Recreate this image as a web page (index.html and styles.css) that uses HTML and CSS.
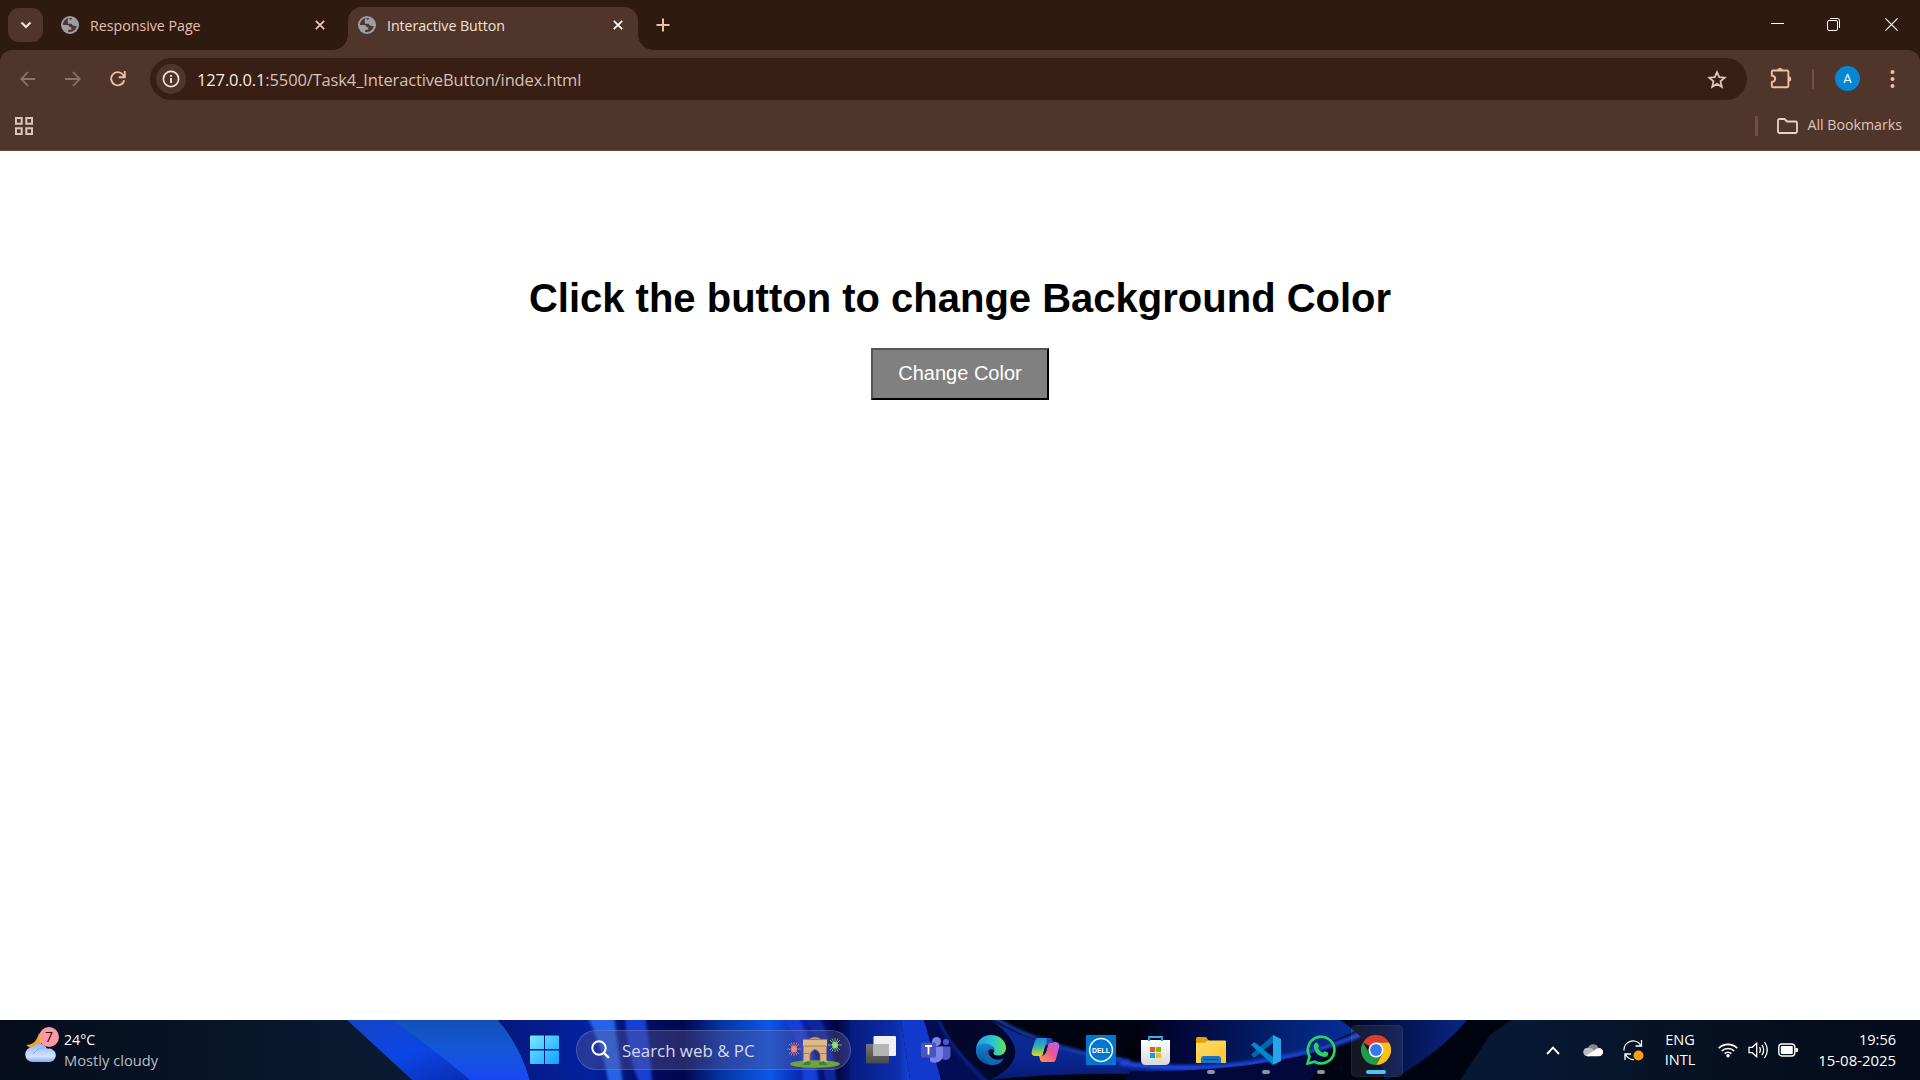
FILE: index.html
```html
<!DOCTYPE html>
<html lang="en">
<head>
<meta charset="utf-8">
<title>Interactive Button</title>
<link rel="stylesheet" href="styles.css">
</head>
<body>
<svg class="defs" width="0" height="0" aria-hidden="true">
  <symbol id="globe" viewBox="0 0 18 18">
    <circle cx="9" cy="9" r="9" fill="#9aa0a6"/>
    <path d="M8 2.1C4.500 2.600 2 5.500 2 9l3.900 0c1.700 0 2.700.9 2.700 2.300h1.700v2.500H7.200v1.900c4.200 1 8-1.900 8.600-5.700-.9-.8-1.900-1-3-.9-1.500 0-2-.9-2-2.100H7.600V4.600h2.700c0-1 .3-1.600 1-2.200C10.200 2 9 1.900 8 2.100z" fill="#50362a"/>
    <path d="M8 2.100C7.300 2.500 6.700 3.200 6.800 4.600v3.200H11c.1 1.300.8 2 2 2 1.200-.1 2.100.1 2.900.8A7 7 0 0 0 11.300 2.400c-.9.5-1.200 1.300-1.100 2.200z" fill="#9aa0a6"/>
  </symbol>
  <symbol id="cross" viewBox="0 0 10 10"><path d="M.8.800l8.400 8.400M9.200.800L.8 9.200" stroke="currentColor" stroke-width="1.700" fill="none"/></symbol>
</svg>

<header class="browser">
  <div class="tabstrip">
    <button class="tab-search"><svg width="12" height="8" viewBox="0 0 12 8"><path d="M1.500 1.500L6 6l4.500-4.500" fill="none" stroke="#f6e0d8" stroke-width="2.200"/></svg></button>
    <div class="tab">
      <svg class="globe"><use href="#globe"/></svg>
      <span>Responsive Page</span>
      <svg class="close"><use href="#cross"/></svg>
    </div>
    <div class="tab active">
      <svg class="globe"><use href="#globe"/></svg>
      <span>Interactive Button</span>
      <svg class="close"><use href="#cross"/></svg>
    </div>
    <svg class="new-tab" width="14" height="14" viewBox="0 0 14 14"><path d="M7 .5v13M.5 7h13" stroke="#f0bda6" stroke-width="2"/></svg>
    <div class="window-controls">
      <svg width="13" height="13" viewBox="0 0 13 13"><path d="M0 5.500h13" stroke="#fff"/></svg>
      <svg width="13" height="13" viewBox="0 0 13 13"><rect x=".5" y="2.500" width="10" height="10" rx="1.500" fill="none" stroke="#fff"/><path d="M3 .5h7.500a2 2 0 0 1 2 2V10" fill="none" stroke="#fff"/></svg>
      <svg width="13" height="13" viewBox="0 0 13 13"><path d="M.4.400l12.200 12.200M12.600.400L.4 12.600" stroke="#fff" stroke-width="1.200"/></svg>
    </div>
  </div>

  <div class="toolbar-bg">
    <div class="toolbar">
      <svg class="nav" width="16" height="16" viewBox="0 0 16 16"><path d="M15 8H1.500M8 1L1.300 8 8 15" fill="none" stroke="#8d7267" stroke-width="1.800"/></svg>
      <svg class="nav" width="16" height="16" viewBox="0 0 16 16"><path d="M0 8h14.500M8 1l6.700 7L8 15" fill="none" stroke="#8d7267" stroke-width="1.800"/></svg>
      <svg class="nav" width="16" height="16" viewBox="0 0 16 16"><path d="M14.200 9.200A6.600 6.600 0 1 1 12.800 3.500L14.500 5.600M14.800 0v6.200H8.700" fill="none" stroke="#f0bda6" stroke-width="1.900"/></svg>
      <div class="omnibox">
        <div class="site-info"><svg width="18" height="18" viewBox="0 0 18 18"><circle cx="9" cy="9" r="7.600" fill="none" stroke="#f3e0d9" stroke-width="1.700"/><path d="M9 8v5M9 5v1.800" stroke="#f3e0d9" stroke-width="1.900"/></svg></div>
        <span class="url"><b>127.0.0.1</b>:5500/Task4_InteractiveButton/index.html</span>
        <svg class="star" width="20" height="19" viewBox="0 0 20 19"><path d="M10 2.200l2.200 5 5.500.5-4.200 3.700 1.300 5.400L10 13.900l-4.800 2.900 1.300-5.400L2.300 7.700l5.500-.5z" fill="none" stroke="#dcc5bd" stroke-width="1.800"/></svg>
      </div>
      <svg class="puzzle" width="22" height="22" viewBox="0 0 22 22"><path d="M3 3.500H17.200A1.200 1.200 0 0 1 18.400 4.700V19a1.200 1.200 0 0 1-1.200 1.200H3A1.200 1.200 0 0 1 1.800 19v-3.900Q5.200 14.500 5.200 11.800T1.800 8.500V4.700A1.200 1.200 0 0 1 3 3.500z" fill="none" stroke="#f0bda6" stroke-width="1.900"/><path d="M7.300 3.600a2.700 2.700 0 0 1 5.400 0zM18.500 9.200a2.700 2.700 0 0 1 0 5.400z" fill="#f0bda6"/></svg>
      <i class="divider"></i>
      <span class="avatar">A</span>
      <svg class="menu" width="5" height="18" viewBox="0 0 5 18" fill="#f0bda6"><circle cx="2.500" cy="2" r="2"/><circle cx="2.500" cy="9" r="2"/><circle cx="2.500" cy="16" r="2"/></svg>
    </div>
    <div class="bookmarks">
      <svg width="18" height="18" viewBox="0 0 18 18"><path d="M1 1h5.700v5.700H1zM11.300 1H17v5.700h-5.700zM1 11.300h5.700V17H1zM11.300 11.300H17V17h-5.700z" fill="none" stroke="#dcc5bd" stroke-width="2"/></svg>
      <div class="all-bookmarks">
        <i class="divider wide"></i>
        <svg width="21" height="16" viewBox="0 0 21 16"><path d="M2.500 1h5L10 3.500h8.500A1.500 1.500 0 0 1 20 5v8.500a1.500 1.500 0 0 1-1.500 1.500h-16A1.500 1.500 0 0 1 1 13.500v-11A1.500 1.500 0 0 1 2.500 1z" fill="none" stroke="#e6d3cc" stroke-width="1.800"/></svg>
        <span>All Bookmarks</span>
      </div>
    </div>
  </div>
</header>

<main class="page">
  <h1>Click the button to change Background Color</h1>
  <button class="change">Change Color</button>
</main>

<footer class="taskbar">
  <svg class="wallpaper" width="1920" height="60" viewBox="0 0 1920 60" preserveAspectRatio="none">
    <defs>
      <filter id="soft" x="-5%" y="-50%" width="110%" height="200%"><feGaussianBlur stdDeviation="1.600"/></filter>
      <linearGradient id="base"><stop offset="0" stop-color="#050d1c"/><stop offset=".19" stop-color="#091a31"/><stop offset=".8" stop-color="#071832"/><stop offset=".9" stop-color="#061020"/><stop offset="1" stop-color="#040b1a"/></linearGradient>
      <linearGradient id="p1" x1="0" y1="0" x2="1" y2="1"><stop offset="0" stop-color="#1646c4"/><stop offset=".5" stop-color="#0b45e5"/><stop offset="1" stop-color="#0928a8"/></linearGradient>
      <linearGradient id="p2" x1="0" y1="0" x2="0" y2="1"><stop offset="0" stop-color="#1252b8"/><stop offset=".5" stop-color="#1457da"/><stop offset="1" stop-color="#1848f4"/></linearGradient>
      <linearGradient id="p3" gradientUnits="userSpaceOnUse" x1="498" y1="0" x2="870" y2="0"><stop offset="0" stop-color="#06177e"/><stop offset=".25" stop-color="#0422a0"/><stop offset=".38" stop-color="#030e66"/><stop offset=".5" stop-color="#02084c"/><stop offset=".6" stop-color="#0634a4"/><stop offset=".73" stop-color="#0c58e8"/><stop offset=".84" stop-color="#0618a0"/><stop offset=".91" stop-color="#02043c"/><stop offset="1" stop-color="#0a31bd"/></linearGradient>
      <linearGradient id="p4" x1="0" y1="0" x2="1" y2="0"><stop offset="0" stop-color="#071b7e"/><stop offset=".8" stop-color="#0c2fae"/><stop offset="1" stop-color="#1746d8"/></linearGradient>
      <linearGradient id="p5" x1="0" y1="0" x2="0" y2="1"><stop offset="0" stop-color="#0d2a9a"/><stop offset=".65" stop-color="#0a2690"/><stop offset="1" stop-color="#061a70"/></linearGradient>
      <linearGradient id="p6" x1="0" y1="0" x2="1" y2="0"><stop offset="0" stop-color="#000"/><stop offset=".25" stop-color="#02083c"/><stop offset=".6" stop-color="#031f6c"/><stop offset="1" stop-color="#0733a5"/></linearGradient>
      <linearGradient id="p7" x1="0" y1="0" x2="1" y2="0"><stop offset="0" stop-color="#000518"/><stop offset="1" stop-color="#0a2588"/></linearGradient>
    </defs>
    <rect width="1920" height="60" fill="url(#base)"/>
    <path d="M347 0L412 60H1460L1490 15 1511 0z" fill="#000310"/>
    <path d="M347 0L412 60H490L402 0z" fill="url(#p1)"/>
    <path d="M392 0Q435 30 470 60H530Q520 25 498 0z" fill="url(#p2)"/>
    <path d="M498 0Q520 25 530 60H900V0z" fill="url(#p3)"/>
    <g filter="url(#soft)">
      <path d="M587 -4Q602 25 609 64H623L614 -4z" fill="#2863e6"/>
      <path d="M625 -4Q628 40 640 64H652Q650 25 645 -4z" fill="#133fd4"/>
      <path d="M782 -4Q802 20 803 64H819Q814 25 797 -4z" fill="#183fd5"/>
      <path d="M803 -4Q823 25 825 64H837Q834 25 819 -4z" fill="#0c259b"/>
    </g>
    <path d="M850 0h51l9 60h-60z" fill="url(#p4)"/>
    <path d="M901 0h23q13 35 17 60h-31z" fill="#1239cb"/>
    <path d="M924 0h15Q954 28 990 60H941z" fill="#030d55"/>
    <path d="M939 0h52Q1030 30 1130 43L1140 50Q1050 49 990 60 953 30 939 0z" fill="#02072b"/>
    <path d="M991 0Q1040 30 1125 38L1200 47V56Q1080 50 990 60 1040 35 991 0z" fill="url(#p5)"/>
    <path d="M1140 0H1375Q1330 28 1260 40T1120 42z" fill="url(#p6)"/>
    <g filter="url(#soft)">
      <path d="M939 0Q950 28 988 64" fill="none" stroke="#10319c" stroke-width="2"/>
      <path d="M991 -4Q1045 30 1130 41" fill="none" stroke="#1a43c8" stroke-width="3"/>
      <path d="M1120 43Q1200 53 1265 41T1365 12" fill="none" stroke="#1a45dc" stroke-width="5"/>
    </g>
    <path d="M1130 51Q1240 54 1330 29L1310 60H1125z" fill="#02083c"/>
    <path d="M1340 0H1467Q1440 32 1400 55L1385 60Q1378 25 1340 0z" fill="url(#p7)"/>
  </svg>

  <div class="weather">
    <svg width="36" height="38" viewBox="0 0 36 38">
      <defs><linearGradient id="cl" x1="0" y1="0" x2="0" y2="1"><stop offset="0" stop-color="#8fb6fb"/><stop offset=".7" stop-color="#d3e2fa"/><stop offset="1" stop-color="#80a9ee"/></linearGradient></defs>
      <path d="M14 6c3 5 3 8 1 14L8 23 1 18C8 18 12 14 14 6z" fill="#f7a51c"/>
      <path d="M8 35a7.500 7.500 0 0 1-.5-15A8.500 8.500 0 0 1 22 22a6.700 6.700 0 1 1 1.500 13z" fill="url(#cl)"/>
      <path d="M8 27q7-9 15-5" fill="none" stroke="#88aeea"/>
      <circle cx="24" cy="10" r="10" fill="#ff99a4"/><text x="24" y="15" text-anchor="middle" class="badge-text">7</text>
    </svg>
    <div class="two-line"><span>24°C</span><span class="dim">Mostly cloudy</span></div>
  </div>

  <div class="apps">
    <div class="app"><svg width="30" height="30" viewBox="0 0 30 30"><defs><linearGradient id="win" x1="0" y1="0" x2="1" y2="1"><stop offset="0" stop-color="#7ceaff"/><stop offset="1" stop-color="#0ba0ff"/></linearGradient></defs><path d="M0 1.500Q0 .5 1 .5h13V14H0zM15 .5h13q1 0 1 1V14H15zM0 15.500h14V29H1q-1 0-1-1zM15 15.500h14V28q0 1-1 1H15z" fill="url(#win)"/></svg></div>
    <div class="search">
      <svg width="20" height="20" viewBox="0 0 20 20"><circle cx="8" cy="8" r="6.700" fill="none" stroke="#fff" stroke-width="2"/><path d="M12.800 12.800L18 18" stroke="#fff" stroke-width="2.400"/></svg>
      <span>Search web &amp; PC</span>
      <svg class="gate" width="56" height="32" viewBox="0 0 56 32">
        <ellipse cx="28" cy="28" rx="25" ry="3.800" fill="#70a33c"/>
        <g stroke-width=".8"><path d="M0 13h14M7 6v14M2 8l10 10M12 8L2 18M4 6.500l6 13M10 6.500l-6 13" stroke="#f07f6c"/><path d="M41 9h14M48 2v14M43 4l10 10M53 4L43 14M45 2.500l6 13M51 2.500l-6 13" stroke="#82d66e"/></g>
        <circle cx="7" cy="13" r="3" fill="#e88d7b"/><circle cx="48" cy="9" r="3" fill="#96dc7e"/>
        <path d="M22 3q5.500-4 12 0z" fill="#c39a6c"/><path d="M16 3h24v7H16z" fill="#e0b98b"/><path d="M16.500 10h23v18H33V18q-5-9-10 0v10h-6.500z" fill="#dbb083"/>
        <path d="M16 3.500h24M16.500 10h23M17 17.500h5M34 17.500h5" stroke="#a17c58"/><path d="M23 28V18q5-9 10 0v10" fill="none" stroke="#8f6846" stroke-width=".8"/>
        <path d="M16 29q1-4 3-3 2-2 4 0 1 1 0 3zM32 29q0-4 2-3 3-2 4 0 2 1 2 3z" fill="#358733"/>
      </svg>
    </div>
    <div class="app first"><svg width="30" height="30" viewBox="0 0 30 30"><defs><linearGradient id="tv1" x1="0" y1="0" x2="0" y2="1"><stop offset="0" stop-color="#777"/><stop offset="1" stop-color="#484848"/></linearGradient></defs><rect y="9" width="23" height="19.500" rx="1" fill="url(#tv1)"/><rect x="7.500" y="1" width="22.500" height="20" rx="1" fill="#f0f0f0"/><path d="M7.500 9H23v12H7.500z" fill="#b5b5b5"/></svg></div>
    <div class="app"><svg width="30" height="30" viewBox="0 0 30 30"><circle cx="25" cy="7" r="3" fill="#5059c9"/><path d="M20 11.500h9.500V20a5 5 0 0 1-9 3z" fill="#5059c9"/><circle cx="15.500" cy="6.500" r="4.500" fill="#7b83eb"/><path d="M9 11.500h13V20a8 8 0 0 1-13 6z" fill="#7b83eb"/><rect y="7.500" width="15" height="15" rx="1.500" fill="#4b53bc"/><path d="M4 11h7M7.500 11v8.500" stroke="#fff" stroke-width="1.800"/></svg></div>
    <div class="app"><svg width="30" height="30" viewBox="0 0 30 30"><defs><linearGradient id="e1"><stop offset="0" stop-color="#1d9de8"/><stop offset=".55" stop-color="#2bc3d2"/><stop offset="1" stop-color="#68e35a"/></linearGradient><linearGradient id="e2" x1="0" y1="0" x2="0" y2="1"><stop offset="0" stop-color="#1687d9"/><stop offset="1" stop-color="#0b4a96"/></linearGradient></defs><path d="M0 14C1 5 7 0 15 0c9 0 15 6 15 13 0 5-4 7.500-8 7.500-3 0-5-1.200-4.500-2.500C20 14 17 10 11 10 6 9 2 10 0 14z" fill="url(#e1)"/><path d="M0 14C2 9 7 7 12 9c4 1 6 4 6 6-4-3-7 1-6 5 1 6 7 9 15 5C23 31 15 31 10 29 3 26-1 20 0 14z" fill="url(#e2)"/><path d="M12 14C6 18 8 27 15 30c5 0 10-2 13-7-7 4-16 1-16-9z" fill="#1269ad"/></svg></div>
    <div class="app"><svg width="30" height="30" viewBox="0 0 30 30"><defs><linearGradient id="c1" x1="0" y1="0" x2="0" y2="1"><stop offset="0" stop-color="#168bea"/><stop offset=".5" stop-color="#36b69c"/><stop offset="1" stop-color="#f2d11c"/></linearGradient><linearGradient id="c2" x1="1" y1="0" x2="0" y2="1"><stop offset="0" stop-color="#b35df0"/><stop offset=".5" stop-color="#f3568c"/><stop offset="1" stop-color="#ff9f46"/></linearGradient></defs><path d="M7 3h11c3 0 3 3 4 5-5 0-7 0-8 4l-2 7c-1 3-3 2-7 2-4 0-5-2-4-6L4 6q1-3 3-3z" fill="url(#c1)"/><path d="M23 27H12c-3 0-3-3-4-6 5 0 6-1 7-4l2-7c1-3 4-3 7-3 4 0 5 3 4 6l-3 11q-1 3-2 3z" fill="url(#c2)"/><path d="M16 3h3c3 0 2 4 4 5h-5c-3 0-3 1-3 2z" fill="#2447ad"/><path d="M14.500 10.500h2.300L14.800 18h-2.400z" fill="#03103f"/></svg></div>
    <div class="app"><svg width="30" height="30" viewBox="0 0 30 30"><rect width="30" height="30" fill="#0076ce"/><circle cx="15" cy="15" r="11.400" fill="none" stroke="#fff" stroke-width="1.500"/><text x="15" y="17.700" text-anchor="middle" textLength="18" lengthAdjust="spacingAndGlyphs" class="dell">DELL</text></svg></div>
    <div class="app"><svg width="30" height="30" viewBox="0 0 30 30"><defs><linearGradient id="st" x1="0" y1="0" x2="0" y2="1"><stop offset="0" stop-color="#fff"/><stop offset="1" stop-color="#d8d8d8"/></linearGradient></defs><path d="M8 8V2h13v6" fill="none" stroke="#30b4f0" stroke-width="2"/><path d="M0 5h29v20q0 5-5 5H5q-5 0-5-5z" fill="url(#st)"/><path d="M8 2v4M21 2v4" stroke="#229bdc" stroke-width="2"/><path d="M9 12h5v5H9z" fill="#f25022"/><path d="M15 12h5v5h-5z" fill="#7fba00"/><path d="M9 18h5v5H9z" fill="#00a4ef"/><path d="M15 18h5v5h-5z" fill="#ffb900"/></svg></div>
    <div class="app running"><svg width="30" height="30" viewBox="0 0 30 30"><defs><linearGradient id="fo" x1="0" y1="0" x2="1" y2="1"><stop offset="0" stop-color="#ffdc69"/><stop offset="1" stop-color="#ffc42a"/></linearGradient></defs><path d="M0 3.500Q0 2 1.500 2H10l3 4v4H0z" fill="#e3a008"/><path d="M0 8l9-.3L12 5.500h17q1 0 1 1V28H1q-1 0-1-1z" fill="url(#fo)"/><path d="M5 28v-4q0-3 3-3h14q3 0 3 3v4z" fill="#1676c5"/><path d="M8.500 24.500h13" stroke="#0a4279"/></svg></div>
    <div class="app running"><svg width="30" height="30" viewBox="0 0 30 30"><path d="M0 19.500L22 0v9L3 23z" fill="#0065a9"/><path d="M0 10l3-3 19 14v9z" fill="#0088cc"/><path d="M22 0l8 4v22l-8 4z" fill="#24a5ed"/><path d="M22 8v14l-9-7z" fill="#041556"/></svg></div>
    <div class="app running"><svg width="30" height="30" viewBox="0 0 30 30"><path d="M1.500 28.500l2-7A13.300 13.300 0 1 1 8.700 26.700z" fill="none" stroke="#25d366" stroke-width="2.700"/><path d="M10 7.500l1.500.2 1.500 3.500-1.200 2q1.700 3 5 4.500l1.700-1.700 3.800 1.800q.5 4-4 4.300Q8.500 20.500 7.600 11q.6-2.700 2.400-3.500z" fill="#25d366"/></svg></div>
    <div class="app running current"><svg width="30" height="30" viewBox="0 0 30 30"><path d="M15 15L2 7.500A15 15 0 0 1 28 7.500H15z" fill="#e33b2e"/><path d="M15 7.500h13A15 15 0 0 1 15 30l6.500-11.200z" fill="#fbc116"/><path d="M2 7.500A15 15 0 0 0 15 30l6.500-11.200L15 15 8.500 18.700z" fill="#229a4c"/><circle cx="15" cy="15" r="7.500" fill="#fff"/><circle cx="15" cy="15" r="5.900" fill="#3479ed"/></svg></div>
  </div>

  <div class="tray">
    <svg class="chev" width="14" height="9" viewBox="0 0 14 9"><path d="M1 8l6-6.300L13 8" fill="none" stroke="#fff" stroke-width="1.900"/></svg>
    <svg class="cloud" width="20" height="14" viewBox="0 0 20 14"><path d="M5 5a5.500 5.500 0 0 1 10.500 0l-5 4z" fill="#85898f"/><path d="M4.500 13.300a4.300 4.300 0 0 1 0-8.600Q8 4.400 11 7l-4 6.300z" fill="#b9bcc1"/><path d="M3 12.700L12 7Q13.500 5 16 5a4.100 4.100 0 0 1 0 8.300H4.500z" fill="#fff"/></svg>
    <svg class="sync" width="21" height="21" viewBox="0 0 21 21"><path d="M1 10.500A9 9 0 0 1 17.700 5.300M18.500 0v6h-6M2 20v-6h6M2.300 14.500Q6 20 11 19.500" fill="none" stroke="#fff" stroke-width="1.300"/><circle cx="15.500" cy="15.500" r="5" fill="#ff9d0a"/></svg>
    <div class="two-line lang"><span>ENG</span><span>INTL</span></div>
    <svg class="wifi" width="20" height="16" viewBox="0 0 20 16"><path d="M.7 6.200a13.200 13.200 0 0 1 18.600 0M3.700 9a9 9 0 0 1 12.600 0M6.700 11.700a4.800 4.800 0 0 1 6.600 0" fill="none" stroke="#fff" stroke-width="1.600"/><circle cx="10" cy="13.700" r="1.700" fill="#fff"/></svg>
    <svg class="sound" width="21" height="18" viewBox="0 0 21 18"><path d="M1 6.300h3.300l4.400-4v13.400l-4.400-4H1z" fill="none" stroke="#fff" stroke-width="1.300"/><path d="M11.500 6.200q1.700 2.800 0 5.600M14 3.800q3.300 5.200 0 10.400M16.500 1q5.600 8 0 16" fill="none" stroke="#fff" stroke-width="1.300"/></svg>
    <svg width="20" height="14" viewBox="0 0 20 14"><rect x=".8" y="1" width="16" height="12" rx="3" fill="none" stroke="#fff" stroke-width="1.400"/><rect x="2.800" y="3" width="12" height="8" rx="1" fill="#fff"/><path d="M17.500 5H19q1 0 1 1v2q0 1-1 1h-1.500z" fill="#fff"/></svg>
    <div class="two-line clock"><span>19:56</span><span>15-08-2025</span></div>
  </div>
</footer>
</body>
</html>
```
FILE: styles.css
```css
* { box-sizing: border-box; }

body {
  margin: 0;
  width: 1920px;
  height: 1080px;
  overflow: hidden;
  display: flex;
  flex-direction: column;
  background: #fff;
  font-family: "Open Sans", "Noto Sans", sans-serif;
  font-size: 14.2px;
}

svg { display: block; flex: none; }
.defs { position: absolute; }
span { white-space: nowrap; }

/* Browser frame */
.browser { background: #2f1a0f; flex: none; height: 151px; }

.tabstrip {
  height: 50px;
  display: flex;
  align-items: flex-start;
  padding-left: 8px;
}

.tab-search {
  width: 35px;
  height: 34px;
  margin-top: 8px;
  padding: 0;
  border: 0;
  border-radius: 11px;
  background: #50362a;
  display: flex;
  align-items: center;
  justify-content: center;
}

.tab {
  display: flex;
  align-items: center;
  height: 43px;
  margin-top: 7px;
  width: 287px;
  padding: 0 10px 7px 0;
  color: #e5c0b0;
}

.tab:not(.active) { margin-left: 18px; }
.tab .globe { width: 18px; height: 18px; margin-right: 11px; }
.tab .close { width: 10px; height: 10px; margin-left: auto; color: #f0c8b5; }
.tab:not(.active) .close { margin-right: 13px; }

.tab.active {
  position: relative;
  width: 290px;
  padding: 0 15px 7px 10px;
  border-radius: 14px 14px 0 0;
  background: #50362a;
  color: #f6e0d8;
}

.tab.active span { letter-spacing: -0.05px; }
.tab.active .close { color: #fff; }

.tab.active::before,
.tab.active::after {
  content: "";
  position: absolute;
  bottom: 0;
  width: 15px;
  height: 15px;
}

.tab.active::before {
  left: -15px;
  background: radial-gradient(circle at 0 0, transparent 14.5px, #50362a 15px);
}

.tab.active::after {
  right: -15px;
  background: radial-gradient(circle at 100% 0, transparent 14.5px, #50362a 15px);
}

.new-tab { margin: 18px 0 0 18px; }

.window-controls {
  display: flex;
  gap: 44px;
  margin: 18px 22px 0 auto;
}

.window-controls svg:first-child { margin-right: -1px; }
.window-controls svg:last-child { margin-left: 1px; }

.toolbar-bg {
  height: 101px;
  background: #50362a;
  border-radius: 12px 12px 0 0;
  border-bottom: 1px solid #69483d;
}

.toolbar {
  display: flex;
  align-items: center;
  height: 57px;
  padding: 1px 25px 0 20px;
}

.nav { margin: -1px 29px 0 0; }
.nav:nth-child(3) { margin-right: 24px; }

.omnibox {
  width: 1597px;
  height: 42px;
  border-radius: 21px;
  background: #381e13;
  display: flex;
  align-items: center;
  padding: 0 20px 0 6px;
}

.site-info {
  width: 30px;
  height: 30px;
  border-radius: 50%;
  background: #50362a;
  display: flex;
  align-items: center;
  justify-content: center;
}

.url {
  margin-left: 11px;
  font-size: 16.5px;
  letter-spacing: -0.14px;
  color: #d7c0b6;
}

.url b { font-weight: 400; color: #f8e9e3; }
.star { margin-left: auto; }
.puzzle { margin: -2px 0 0 23px; }

.divider {
  width: 2px;
  height: 20px;
  border-radius: 1px;
  background: #70503f;
}

.toolbar .divider { margin-left: 20px; }

.avatar {
  width: 25px;
  height: 25px;
  border-radius: 50%;
  margin: -2px 0 0 21px;
  background: #0288d1;
  color: #fff;
  font: 400 13px/25px Roboto, sans-serif;
  text-align: center;
}

.menu { margin: -1px 0 0 auto; }

.bookmarks {
  display: flex;
  align-items: center;
  height: 37px;
  padding: 0 18px 0 15px;
  color: #dcc5bd;
}

.all-bookmarks {
  margin-left: auto;
  display: flex;
  align-items: center;
}

.divider.wide { width: 3px; margin-right: 19px; }
.all-bookmarks span { margin: -2px 0 0 9px; }

/* Page content */
.page {
  flex: 1;
  display: flex;
  flex-direction: column;
  align-items: center;
  font-family: Arial, "Liberation Sans", sans-serif;
}

h1 {
  margin: 124px 0 27px;
  font-size: 40px;
  line-height: 46px;
  color: #000;
}

.change {
  width: 178px;
  height: 52px;
  padding: 0 0 2px;
  border: 2px solid;
  border-color: #555 #000 #000 #555;
  background: #808080;
  color: #fff;
  font: 20px Arial, "Liberation Sans", sans-serif;
}

/* Taskbar */
.taskbar {
  position: relative;
  flex: none;
  height: 60px;
  display: flex;
  align-items: center;
  color: #fff;
}

.wallpaper { position: absolute; inset: 0; }
.taskbar > div { position: relative; }

.two-line {
  display: flex;
  flex-direction: column;
  line-height: 20px;
}

.dim { color: #b9bdc3; }

.weather {
  display: flex;
  align-items: center;
  width: 517px;
  padding-left: 25px;
}

.weather .two-line { margin-left: 3px; font-size: 14.7px; }
.weather .two-line span:first-child { font-size: 14.2px; }
.weather svg { margin-top: -8px; }
.badge-text { font-size: 14px; fill: #24131a; }

.apps { display: flex; }

.app {
  width: 55px;
  height: 60px;
  display: flex;
  align-items: center;
  padding-left: 13px;
  flex: none;
  position: relative;
}

.app.first { margin-left: 2px; }

.search {
  width: 275px;
  height: 40px;
  margin: 10px 0 0 4px;
  padding: 0 7px 0 14px;
  border-radius: 20px;
  border: 1px solid rgba(150, 165, 225, .3);
  background: rgba(90, 90, 150, .4);
  display: flex;
  align-items: center;
}

.search span {
  margin: 1px 0 0 11px;
  font-size: 16.9px;
  color: #d7daf0;
}

.gate { margin: 3px 0 0 auto; }

.running::after {
  content: "";
  position: absolute;
  left: 24px;
  bottom: 6px;
  width: 8px;
  height: 4px;
  border-radius: 2px;
  background: #8f929f;
}

.current::before {
  content: "";
  position: absolute;
  left: 3px;
  top: 5px;
  width: 50px;
  height: 50px;
  border-radius: 5px;
  border: 1px solid rgba(255, 255, 255, .06);
  background: rgba(255, 255, 255, .08);
}

.current svg { position: relative; }
.current::after { left: 18px; width: 20px; background: #4cc2ff; }

.tray {
  margin-left: auto;
  padding-right: 24px;
  display: flex;
  align-items: center;
}

.cloud { margin-left: 23px; }
.sync { margin-left: 20px; }
.lang { width: 32px; margin-left: 20px; align-items: center; font-size: 14.5px; }
.wifi { margin-left: 22px; }
.sound { margin: 0 9px 0 10px; }
.clock { width: 98px; align-items: flex-end; font-size: 14.9px; }
.clock span:first-child { font-size: 14.5px; }
.dell { font: bold 7.5px "Liberation Sans", sans-serif; fill: #fff; }
```
